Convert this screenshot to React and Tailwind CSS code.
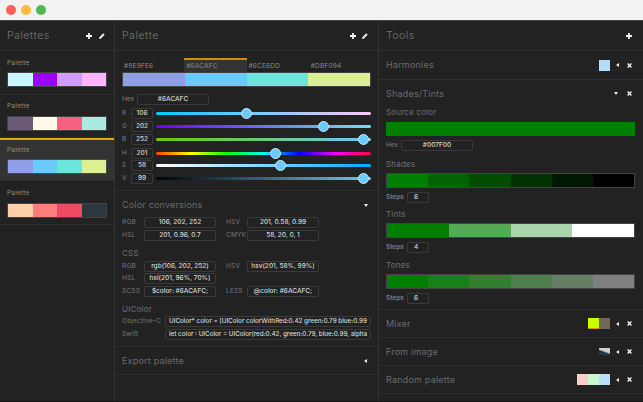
import React from "react";

const Plus = () => (
  <svg width="6" height="6" viewBox="0 0 6 6"><path d="M2.1 0h1.8v2.1H6v1.8H3.9V6H2.1V3.9H0V2.1h2.1z" fill="#f0f0f0" /></svg>
);
const Pen = () => (
  <svg width="6" height="6" viewBox="0 0 6 6"><path d="M0 6l.3-1.8L4.2.3 5.7 1.8 1.8 5.7z" fill="#e8e8e8" /></svg>
);
const X = () => (
  <svg width="5" height="5" viewBox="0 0 5 5"><path d="M.6.6l3.8 3.8M4.4.6L.6 4.4" stroke="#eee" strokeWidth="1.4" fill="none" /></svg>
);
const Left = () => (
  <svg width="3" height="4" viewBox="0 0 3 4"><path d="M3 0v4L0 2z" fill="#eee" /></svg>
);
const Down = () => (
  <svg width="4" height="3" viewBox="0 0 4 3"><path d="M0 0h4L2 3z" fill="#eee" /></svg>
);

function Swatch({ colors }) {
  return (
    <div className="flex h-[15px] w-full border border-[#5a5a5a]/60">
      {colors.map((c, i) => (
        <div key={i} className="flex-1" style={{ background: c }} />
      ))}
    </div>
  );
}

function PaletteItem({ colors, selected, labelClass, h }) {
  return (
    <div className={`flex ${h} flex-col border-b border-[#2f2f2f] px-[7px] ${selected ? "bg-[#333333]" : ""}`}>
      <div className={`${labelClass} h-[10px] text-[6.5px] leading-[10px] tracking-[0.2px] text-[#8c8c8c]`}>Palette</div>
      <Swatch colors={colors} />
    </div>
  );
}

function Input({ w, children, align = "text-center", size = "text-[6.5px]" }) {
  return (
    <div
      className={`${w} ${align} ${size} h-[11px] shrink-0 overflow-hidden whitespace-nowrap rounded-[2px] border border-[#3a3a3a] leading-[9px] font-medium text-[#d8d8d8]`}
    >
      {children}
    </div>
  );
}

function Slider({ label, value, pos, gradient, className }) {
  return (
    <div className={`flex items-center ${className}`}>
      <div className="w-[9px] text-[6.5px] text-[#808080]">{label}</div>
      <Input w="w-[22px]">{value}</Input>
      <div className={`relative ml-[3px] h-[3px] w-[215px] rounded-full ${gradient}`}>
        <div
          className="absolute top-[-4px] h-[11px] w-[11px] rounded-full border border-[#c8e6fb] bg-[#6acafc]"
          style={{ left: pos }}
        />
      </div>
    </div>
  );
}

function Lbl({ children, w }) {
  return <div className={`${w} shrink-0 text-[6.5px] leading-[11px] tracking-[0.2px] text-[#777777]`}>{children}</div>;
}

function ConvRow({ a, b, c, d, className = "" }) {
  return (
    <div className={`flex h-[11px] items-center ${className}`}>
      <Lbl w="w-[22px]">{a}</Lbl>
      <Input w="w-[72px]">{b}</Input>
      {c && <div className="ml-[10px] flex items-center"><Lbl w="w-[21px]">{c}</Lbl><Input w="w-[72px]">{d}</Input></div>}
    </div>
  );
}

function SubTitle({ children, className = "" }) {
  return <div className={`text-[8px] leading-[10px] tracking-[0.2px] text-[#6f6f6f] ${className}`}>{children}</div>;
}

const sectionTitle = "flex-1 text-[9px] tracking-[0.2px] text-[#6a6a6a]";
const panelTitle = "flex-1 pt-[1px] text-[10.5px] tracking-[0.4px] text-[#666666]";

function ToolRow({ title, children, h = "h-[28px]" }) {
  return (
    <div className={`flex ${h} items-center border-b border-[#2f2f2f] pl-[7px] pr-[11px]`}>
      <div className={sectionTitle}>{title}</div>
      {children}
      <div className="ml-[5px] flex w-[4px] justify-center"><Left /></div>
      <div className="ml-[8px]"><X /></div>
    </div>
  );
}

function Steps({ n }) {
  return (
    <div className="mt-[4px] flex h-[11px] items-center">
      <div className="w-[21px] text-[6.5px] font-medium text-[#8a8a8a]">Steps</div>
      <Input w="w-[22px]" align="text-left pl-[6px]">{n}</Input>
    </div>
  );
}

const Tab = ({ children, active }) => (
  <div
    className={`h-[14px] flex-1 border-t-2 pl-[2px] pt-[1px] text-[6.5px] leading-[10px] tracking-[0.2px] text-[#8a8a8a] ${active ? "border-[#c8920f] bg-[#333333]" : "border-transparent"}`}
  >
    {children}
  </div>
);

export default function App() {
  return (
    <div className="flex h-[402px] w-[643px] flex-col overflow-hidden border-b border-[#141414] bg-[#222222] font-['Inter',sans-serif] antialiased">
      <div className="flex h-[21px] shrink-0 items-center gap-[5.5px] border-b border-[#444] bg-[#f2f2f2] pl-[6px]">
        <div className="h-[9.5px] w-[9.5px] rounded-full bg-[#fc5f57]" />
        <div className="h-[9.5px] w-[9.5px] rounded-full bg-[#fdbc40]" />
        <div className="h-[9.5px] w-[9.5px] rounded-full bg-[#4fb84f]" />
      </div>
      <div className="flex min-h-0 flex-1">
        <aside className="w-[115px] shrink-0 border-r border-[#333333]">
          <div className="flex h-[30px] items-center border-b border-[#2f2f2f] pl-[7px] pr-[9px]">
            <div className={panelTitle}>Palettes</div>
            <Plus />
            <div className="ml-[7px]"><Pen /></div>
          </div>
          <PaletteItem h="h-[44px]" labelClass="mt-[7px] mb-[4px]" colors={["#c9f6ff", "#9c00ff", "#d09cff", "#ffb6ff"]} />
          <PaletteItem h="h-[43px]" labelClass="mt-[6px] mb-[5px]" colors={["#6a5a78", "#fff9e8", "#f6627f", "#a9ebe3"]} />
          <div className="h-[2px] bg-[#dba710]" />
          <PaletteItem h="h-[41px]" labelClass="mt-[5px] mb-[4px]" selected colors={["#8e9fe6", "#6acafc", "#6ce6dd", "#dbf094"]} />
          <PaletteItem h="h-[44px]" labelClass="mt-[7px] mb-[5px]" colors={["#ffcfa8", "#ff7d7d", "#ee4a63", "#2c373f"]} />
        </aside>

        <main className="w-[264px] shrink-0 border-r border-[#333333]">
          <div className="flex h-[30px] items-center border-b border-[#2f2f2f] pl-[7px] pr-[10px]">
            <div className={panelTitle}>Palette</div>
            <Plus />
            <div className="ml-[6px]"><Pen /></div>
          </div>
          <div className="h-[140px] border-b border-[#2f2f2f] px-[7px] pt-[7px]">
            <div className="flex w-[249px]">
              <Tab>#8E9FE6</Tab>
              <Tab active>#6ACAFC</Tab>
              <Tab>#6CE6DD</Tab>
              <Tab>#DBF094</Tab>
            </div>
            <div className="w-[249px]">
              <Swatch colors={["#8e9fe6", "#6acafc", "#6ce6dd", "#dbf094"]} />
            </div>
            <div className="mt-[7px] flex items-center">
              <div className="w-[15px] text-[6.5px] text-[#808080]">Hex</div>
              <Input w="w-[72px]">#6ACAFC</Input>
            </div>
            <Slider className="mt-[3px]" label="R" value="106" pos="85px" gradient="bg-[linear-gradient(90deg,#00cafc,#ffcafc)]" />
            <Slider className="mt-[2px]" label="G" value="202" pos="162px" gradient="bg-[linear-gradient(90deg,#6a00fc,#6ae6ec)]" />
            <Slider className="mt-[2px]" label="B" value="252" pos="202px" gradient="bg-[linear-gradient(90deg,#6aca00,#6acafc)]" />
            <Slider className="mt-[3px]" label="H" value="201" pos="114px" gradient="bg-[linear-gradient(90deg,#ff4000,#ffff00,#00ff00,#00ffff,#0000ff,#ff00ff,#ff0040)]" />
            <Slider className="mt-[1px]" label="S" value="58" pos="119px" gradient="bg-[linear-gradient(90deg,#ffffff,#00aaff)]" />
            <Slider className="mt-[2px]" label="V" value="99" pos="202px" gradient="bg-[linear-gradient(90deg,#000000,#6acafc)]" />
          </div>
          <div className="h-[156px] border-b border-[#2f2f2f] px-[7px]">
            <div className="flex h-[26px] items-center pt-[2px] pr-[3px]">
              <div className={sectionTitle}>Color conversions</div>
              <Down />
            </div>
            <ConvRow a="RGB" b="106, 202, 252" c="HSV" d="201, 0.58, 0.99" />
            <ConvRow className="mt-[2px]" a="HSL" b="201, 0.96, 0.7" c="CMYK" d="58, 20, 0, 1" />
            <SubTitle className="mt-[7px] mb-[3px]">CSS</SubTitle>
            <ConvRow a="RGB" b="rgb(106, 202, 252)" c="HSV" d="hsv(201, 58%, 99%)" />
            <ConvRow className="mt-[1px]" a="HSL" b="hsl(201, 96%, 70%)" />
            <ConvRow className="mt-[2px]" a="SCSS" b="$color: #6ACAFC;" c="LESS" d="@color: #6ACAFC;" />
            <SubTitle className="mt-[7px] mb-[2px]">UIColor</SubTitle>
            <div className="flex h-[11px] items-center">
              <Lbl w="w-[43px]">Objective-C</Lbl>
              <Input w="w-[206px]" size="text-[6.3px]" align="text-left pl-[3px]">UIColor* color = [UIColor colorWithRed:0.42 green:0.79 blue:0.99</Input>
            </div>
            <div className="mt-[2px] flex h-[11px] items-center">
              <Lbl w="w-[43px]">Swift</Lbl>
              <Input w="w-[206px]" size="text-[6.3px]" align="text-left pl-[3px]">let color : UIColor = UIColor(red:0.42, green:0.79, blue:0.99, alpha</Input>
            </div>
          </div>
          <div className="flex h-[28px] items-center border-b border-[#2f2f2f] pl-[7px] pr-[11px]">
            <div className={sectionTitle}>Export palette</div>
            <Left />
          </div>
        </main>

        <section className="min-w-0 flex-1">
          <div className="flex h-[30px] items-center border-b border-[#2f2f2f] pl-[7px] pr-[11px]">
            <div className={panelTitle}>Tools</div>
            <Plus />
          </div>
          <ToolRow title="Harmonies" h="h-[29px]">
            <div className="h-[11px] w-[11px] bg-[#b5dcf8]" />
          </ToolRow>
          <div className="h-[230px] border-b border-[#2f2f2f] pl-[7px] pr-[8px]">
            <div className="flex h-[27px] items-center pr-[3px]">
              <div className={sectionTitle}>Shades/Tints</div>
              <Down />
              <div className="ml-[9px]"><X /></div>
            </div>
            <SubTitle>Source color</SubTitle>
            <div className="mt-[5px] h-[14px] bg-[#007f00]" />
            <div className="mt-[4px] flex items-center">
              <div className="w-[15px] text-[6.5px] text-[#808080]">Hex</div>
              <Input w="w-[72px]">#007F00</Input>
            </div>
            <SubTitle className="mt-[8px] mb-[4px]">Shades</SubTitle>
            <Swatch colors={["#007f00", "#006500", "#004c00", "#003200", "#001900", "#000000"]} />
            <Steps n="6" />
            <SubTitle className="mt-[6px] mb-[4px]">Tints</SubTitle>
            <Swatch colors={["#007f00", "#55aa55", "#aad4aa", "#ffffff"]} />
            <Steps n="4" />
            <SubTitle className="mt-[7px] mb-[4px]">Tones</SubTitle>
            <Swatch colors={["#007f00", "#197f19", "#327f32", "#4c7f4c", "#657f65", "#7f7f7f"]} />
            <Steps n="6" />
          </div>
          <ToolRow title="Mixer">
            <div className="flex h-[11px] w-[22px]">
              <div className="flex-1 border-b border-[#d89a10] bg-[#c8ff00]" />
              <div className="flex-1 bg-[#726656]" />
            </div>
          </ToolRow>
          <ToolRow title="From image">
            <div className="h-[7px] w-[11px] bg-[linear-gradient(200deg,#cfcfcf_45%,#1e3a4c_60%)]" />
          </ToolRow>
          <ToolRow title="Random palette">
            <div className="flex h-[11px] w-[33px]">
              <div className="flex-1 bg-[#ffcccc]" />
              <div className="flex-1 bg-[#c8f8d0]" />
              <div className="flex-1 bg-[#b8e0f8]" />
            </div>
          </ToolRow>
        </section>
      </div>
    </div>
  );
}
